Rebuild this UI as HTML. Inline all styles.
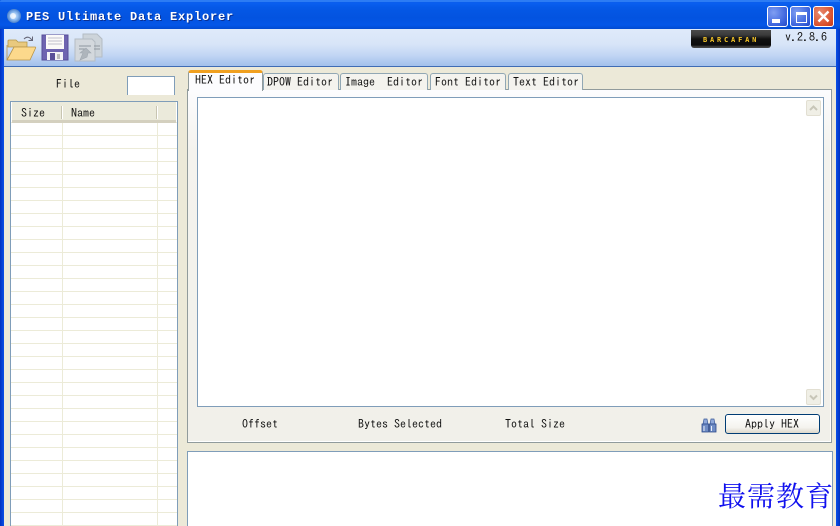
<!DOCTYPE html>
<html><head><meta charset="utf-8"><style>
html,body{margin:0;padding:0}
body{width:840px;height:526px;overflow:hidden;position:relative;background:#ece9d8;font-family:"IPAGothic","Liberation Mono",monospace;font-size:12px;color:#000}
.a{position:absolute;box-sizing:border-box}
.t{position:absolute;white-space:pre;line-height:12px;font-size:12px;color:#111}
.tab{position:absolute;box-sizing:border-box;background:#f4f3ee;border:1px solid #91a7b4;border-bottom:0;border-radius:3px 3px 0 0;top:73px;height:17px}
.wb{position:absolute;top:6px;width:21px;height:21px;border:1px solid #fff;border-radius:3px;box-sizing:border-box;background:radial-gradient(circle at 30% 30%,#7f9ef2,#3a62dc 70%,#2549c4)}
</style></head><body>
<div class="a" style="left:0;top:0;width:840px;height:30px;background:linear-gradient(#0a58e0 0,#0a5ff0 3px,#0558e6 8px,#0353e0 18px,#0456e8 25px,#0148cc 30px)"></div>
<div class="a" style="left:0;top:0;width:840px;height:2px;background:#2c7cf4;border-radius:6px 6px 0 0"></div>
<div class="a" style="left:0;top:29px;width:4px;height:497px;background:linear-gradient(90deg,#0031c0,#0a50e8)"></div>
<div class="a" style="left:836px;top:29px;width:4px;height:497px;background:linear-gradient(90deg,#0a50e8,#0031c0)"></div>
<svg class="a" style="left:6px;top:8px" width="16" height="16"><defs><radialGradient id="o" cx=".5" cy=".5"><stop offset="0" stop-color="#dff0ff"/><stop offset=".55" stop-color="#8fbcf0"/><stop offset="1" stop-color="#4a80cc"/></radialGradient></defs><circle cx="8" cy="8" r="7" fill="url(#o)"/><circle cx="7" cy="8" r="3" fill="#fff" opacity=".7"/></svg>
<div class="t" style="left:26px;top:11px;font-family:'Liberation Mono',monospace;font-size:12px;font-weight:bold;color:#fff;letter-spacing:.8px;text-shadow:1px 1px 0 #0a2f90">PES Ultimate Data Explorer</div>
<div class="wb" style="left:767px"><div class="a" style="left:4px;top:12px;width:8px;height:4px;background:#fff"></div></div>
<div class="wb" style="left:790px"><div class="a" style="left:5px;top:5px;width:11px;height:11px;border:1px solid #fff;border-top-width:3px"></div></div>
<div class="wb" style="left:813px;background:radial-gradient(circle at 30% 30%,#e88a70,#d8502c 70%,#c03a1a)"><svg class="a" style="left:3px;top:3px" width="13" height="13"><path d="M1.500 1.500L11.500 11.500M11.500 1.500L1.500 11.500" stroke="#fff" stroke-width="2.400" fill="none"/></svg></div>

<div class="a" style="left:4px;top:29px;width:832px;height:38px;background:linear-gradient(#dfeafa 0,#d8e5f8 15px,#c2d6f4 26px,#a5c2ec 36px,#a5c2ec 37px);border-bottom:1px solid #3f6cb4"></div>
<svg class="a" style="left:5px;top:33px" width="32" height="30">
<path d="M3 14V8q0-1 1-1h7l2 2h9v5z" fill="#e9c97e" stroke="#b59848" stroke-width=".8"/>
<path d="M2 27L9 14h21q1 0 .6 1L25 27z" fill="#fcd98c" stroke="#b89448" stroke-width=".8"/>
<path d="M2 27V12" stroke="#b89448" fill="none" stroke-width=".8"/>
<path d="M19 6q3-3 6-1l2 2M27.500 3.500v4h-4" stroke="#667" fill="none" stroke-width="1"/>
</svg>
<svg class="a" style="left:41px;top:34px" width="28" height="28">
<path d="M1 1h26v25H1z" fill="#6e64b0" stroke="#574e98"/>
<rect x="5" y="1" width="18" height="14" fill="#fbfaf8"/>
<path d="M7 4h14M7 7h14M7 10h14" stroke="#c0c0cc"/>
<rect x="6" y="18" width="16" height="8" fill="#f4f4f6"/><rect x="9" y="19" width="5" height="7" fill="#5a5098"/><rect x="16" y="20" width="3" height="5" fill="#bbb"/>
</svg>
<svg class="a" style="left:73px;top:33px" width="32" height="30">
<path d="M10 1h14l5 5v18H10z" fill="#cdd4da" stroke="#b4bcc4"/>
<path d="M2 6h17l3 3v19H2z" fill="#d3d8dd" stroke="#b4bcc4"/>
<path d="M6 13h12M6 16h8M21 13h6M21 16h6" stroke="#8e969e"/>
<path d="M7 27l3-7H7l6-5 5 5h-3l-1 4z" fill="#aeb5bc" stroke="#a0a8b0" stroke-width=".6"/>
</svg>
<div class="a" style="left:691px;top:30px;width:80px;height:18px;background:linear-gradient(#4a4a4a 0,#3a3a3a 5px,#111 9px,#0c0c0c 15px,#444 17px);border-radius:0 0 3px 3px"></div>
<div class="t" style="left:703px;top:34px;color:#f4c428;font-family:'DejaVu Sans Mono',monospace;font-size:7px;font-weight:bold;letter-spacing:2.800px">BARCAFAN</div>
<div class="t" style="left:785px;top:31px">v.2.8.6</div>

<div class="t" style="left:56px;top:78px">File</div>
<div class="a" style="left:127px;top:76px;width:48px;height:19px;background:#fff;border:1px solid #7f9db9;border-bottom:0"></div>

<div class="a" style="left:10px;top:101px;width:168px;height:425px;background:#fff;border:1px solid #7f9db9;border-bottom:0;background-image:repeating-linear-gradient(transparent 0,transparent 12px,#ecebd8 12px,#ecebd8 13px);background-position:0 8px"></div>
<div class="a" style="left:62px;top:122px;width:1px;height:404px;background:#ecebd8"></div>
<div class="a" style="left:157px;top:122px;width:1px;height:404px;background:#ecebd8"></div>
<div class="a" style="left:12px;top:102px;width:164px;height:21px;background:#ebeadb;border-bottom:3px solid #d4d0bf"></div>
<div class="a" style="left:61px;top:106px;width:1px;height:13px;background:#c8c5b2;box-shadow:1px 0 0 #fff"></div>
<div class="a" style="left:156px;top:106px;width:1px;height:13px;background:#c8c5b2;box-shadow:1px 0 0 #fff"></div>
<div class="t" style="left:21px;top:107px">Size</div>
<div class="t" style="left:71px;top:107px">Name</div>

<div class="a" style="left:187px;top:89px;width:645px;height:354px;background:linear-gradient(#fcfcfe,#f4f3ee 60px,#f1f0ea);border:1px solid #919b9c;border-right-color:#8f9ba0;box-shadow:inset -1px -1px 0 #fff"></div>
<div class="a" style="left:188px;top:70px;width:75px;height:21px;background:#fcfcfe;border:1px solid #919b9c;border-bottom:0;border-top:3px solid #f0a020;border-radius:3px 3px 0 0"></div>
<div class="t" style="left:195px;top:74px">HEX Editor</div>
<div class="tab" style="left:263px;width:76px"></div><div class="t" style="left:267px;top:76px">DPOW Editor</div>
<div class="tab" style="left:340px;width:88px"></div><div class="t" style="left:345px;top:76px">Image  Editor</div>
<div class="tab" style="left:430px;width:76px"></div><div class="t" style="left:435px;top:76px">Font Editor</div>
<div class="tab" style="left:508px;width:75px"></div><div class="t" style="left:513px;top:76px">Text Editor</div>

<div class="a" style="left:197px;top:97px;width:627px;height:310px;background:#fff;border:1px solid #7f9db9"></div>
<div class="a" style="left:806px;top:100px;width:15px;height:16px;background:#f0efe6;border:1px solid #e2dfd2;border-radius:2px"><svg width="13" height="14"><path d="M3 9l3.500-3.500L10 9" stroke="#c8c6b8" stroke-width="2" fill="none"/></svg></div>
<div class="a" style="left:806px;top:389px;width:15px;height:16px;background:#f0efe6;border:1px solid #e2dfd2;border-radius:2px"><svg width="13" height="14"><path d="M3 5.500l3.500 3.500L10 5.500" stroke="#c8c6b8" stroke-width="2" fill="none"/></svg></div>

<div class="t" style="left:242px;top:418px">Offset</div>
<div class="t" style="left:358px;top:418px">Bytes Selected</div>
<div class="t" style="left:505px;top:418px">Total Size</div>
<svg class="a" style="left:701px;top:418px" width="16" height="15">
<path d="M2 6l1-5h3l1 5zM9 6l1-5h3l1 5z" fill="#8ea8da" stroke="#3c5a98" stroke-width=".7"/>
<path d="M1 14V6h6.500v8zM8.500 14V6H15v8z" fill="#6f8cc4" stroke="#2a4788" stroke-width=".8"/>
<path d="M3 8v5M10.500 8v5" stroke="#e8eefa"/>
</svg>
<div class="a" style="left:725px;top:414px;width:95px;height:20px;background:linear-gradient(#fff,#f4f3ee 70%,#dcd8ca);border:1px solid #003c74;border-radius:3px"></div>
<div class="t" style="left:745px;top:418px">Apply HEX</div>

<div class="a" style="left:187px;top:451px;width:646px;height:75px;background:#fff;border:1px solid #7f9db9;border-bottom:0"></div>
<div class="a" style="left:718px;top:478px;white-space:pre;font-family:'Noto Serif CJK SC','Liberation Serif',serif;font-size:28px;line-height:34px;letter-spacing:1px;color:#1010ee">最需教育</div>
</body></html>
